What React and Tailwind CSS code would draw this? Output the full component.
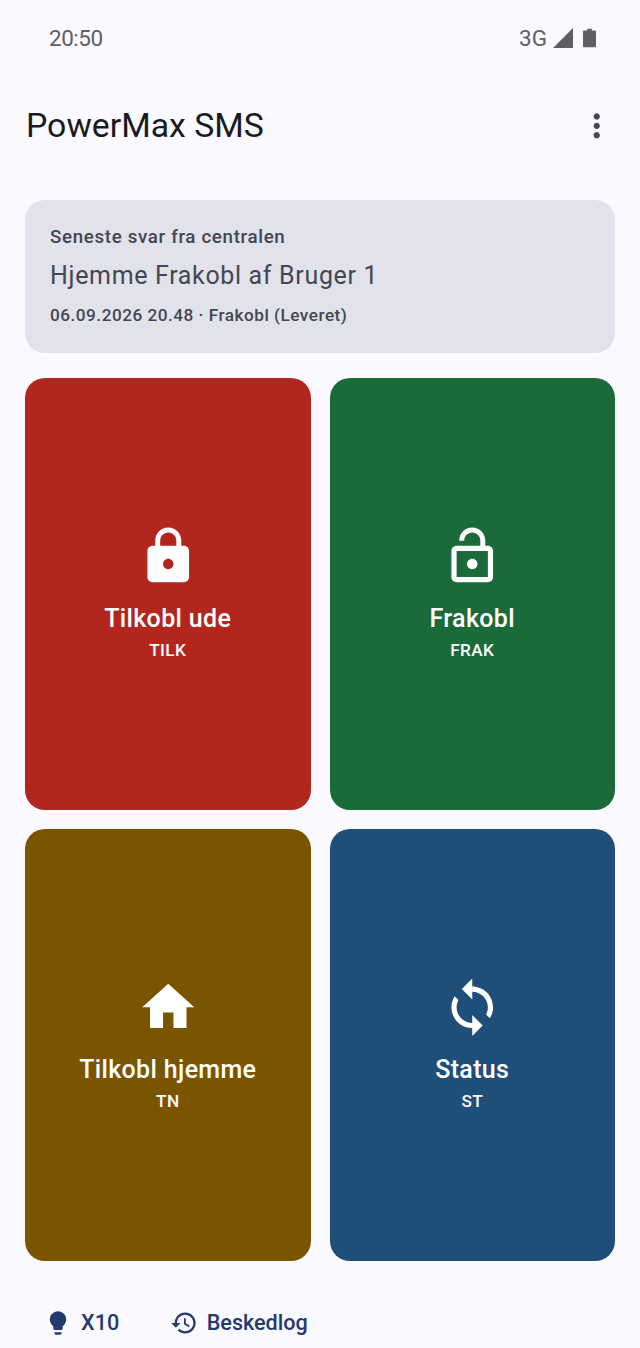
const P = {
  lock: "M18 8h-1V6c0-2.76-2.24-5-5-5S7 3.24 7 6v2H6c-1.1 0-2 .9-2 2v10c0 1.1.9 2 2 2h12c1.1 0 2-.9 2-2V10c0-1.1-.9-2-2-2zm-6 9c-1.1 0-2-.9-2-2s.9-2 2-2 2 .9 2 2-.9 2-2 2zm3.1-9H8.9V6c0-1.71 1.39-3.1 3.1-3.1 1.71 0 3.1 1.39 3.1 3.1v2z",
  open: "M12 17c1.1 0 2-.9 2-2s-.9-2-2-2-2 .9-2 2 .9 2 2 2zm6-9h-1V6c0-2.76-2.24-5-5-5S7 3.24 7 6h1.9c0-1.71 1.39-3.1 3.1-3.1 1.71 0 3.1 1.39 3.1 3.1v2H6c-1.1 0-2 .9-2 2v10c0 1.1.9 2 2 2h12c1.1 0 2-.9 2-2V10c0-1.1-.9-2-2-2zm0 12H6V10h12v10z",
  home: "M10 20v-6h4v6h5v-8h3L12 3 2 12h3v8z",
  sync: "M12 4V1L8 5l4 4V6c3.31 0 6 2.69 6 6 0 1.01-.25 1.97-.7 2.8l1.46 1.46C19.54 15.03 20 13.57 20 12c0-4.42-3.58-8-8-8zm0 14c-3.31 0-6-2.69-6-6 0-1.01.25-1.97.7-2.8L5.24 7.74C4.46 8.97 4 10.43 4 12c0 4.42 3.58 8 8 8v3l4-4-4-4v3z",
  bulb: "M9 21c0 .55.45 1 1 1h4c.55 0 1-.45 1-1v-1H9v1zm3-19C8.14 2 5 5.14 5 9c0 2.38 1.19 4.47 3 5.74V17c0 .55.45 1 1 1h6c.55 0 1-.45 1-1v-2.26c1.81-1.27 3-3.36 3-5.74 0-3.86-3.14-7-7-7z",
  history: "M13 3c-4.97 0-9 4.03-9 9H1l3.89 3.89.07.14L9 12H6c0-3.87 3.13-7 7-7s7 3.13 7 7-3.13 7-7 7c-1.93 0-3.68-.79-4.94-2.06l-1.42 1.42C8.27 19.99 10.51 21 13 21c4.97 0 9-4.03 9-9s-4.03-9-9-9zm-1 5v5l4.28 2.54.72-1.21-3.5-2.08V8H12z",
  more: "M12 8c1.1 0 2-.9 2-2s-.9-2-2-2-2 .9-2 2 .9 2 2 2zm0 2c-1.1 0-2 .9-2 2s.9 2 2 2 2-.9 2-2-.9-2-2-2zm0 6c-1.1 0-2 .9-2 2s.9 2 2 2 2-.9 2-2-.9-2-2-2z",
};

function Icon({ d, className }) {
  return (
    <svg viewBox="0 0 24 24" fill="currentColor" className={className}>
      <path d={d} />
    </svg>
  );
}

function Tile({ bg, icon, title, code }) {
  return (
    <div className={`${bg} rounded-[20px] flex flex-col items-center justify-center text-white`}>
      <Icon d={icon} className="w-[62.5px] h-[62.5px]" />
      <div className="mt-[12.5px] text-[25px] leading-[37.5px] font-medium tracking-[0.35px]">{title}</div>
      <div className="text-[17.2px] leading-[25px] font-medium tracking-[0.4px]">{code}</div>
    </div>
  );
}

export default function App() {
  return (
    <div className="w-[640px] h-[1348px] overflow-hidden flex flex-col bg-[#f9f9ff] font-['Roboto',sans-serif]">
      <div className="h-[76px] shrink-0 pl-[49px] pr-[44px] flex items-center justify-between text-[#5f5f63]">
        <span className="text-[22.5px] leading-none tracking-[-0.5px]">20:50</span>
        <div className="flex items-center">
          <span className="text-[22.5px] leading-none">3G</span>
          <svg viewBox="0 0 20 20" className="w-[20px] h-[20px] ml-[6px]" fill="currentColor">
            <path d="M0 20 20 0v20z" />
          </svg>
          <svg viewBox="0 0 14 20" className="w-[13px] h-[20px] ml-[10px]" fill="currentColor">
            <path d="M4.5 0h5v2H13c.6 0 1 .4 1 1v16c0 .6-.4 1-1 1H1c-.6 0-1-.4-1-1V3c0-.6.4-1 1-1h3.5z" />
          </svg>
        </div>
      </div>
      <div className="h-[100px] shrink-0 pl-[26px] pr-[25px] flex items-center justify-between">
        <h1 className="text-[33.8px] leading-[44px] font-normal text-[#1a1b20]">PowerMax SMS</h1>
        <Icon d={P.more} className="w-[37.5px] h-[37.5px] text-[#44474f]" />
      </div>
      <div className="flex-1 min-h-0 px-[25px] pt-[24px] flex flex-col">
        <div className="h-[153px] shrink-0 rounded-[20px] bg-[#e1e2ec] px-[25px] pt-[25px] text-[#44474f]">
          <div className="text-[18.75px] leading-[25px] font-medium tracking-[0.65px]">Seneste svar fra centralen</div>
          <div className="mt-[7px] text-[25px] leading-[37.5px] tracking-[0.66px]">Hjemme Frakobl af Bruger 1</div>
          <div className="mt-[8px] text-[17.2px] leading-[25px] font-medium tracking-[0.5px]">06.09.2026 20.48 · Frakobl (Leveret)</div>
        </div>
        <div className="mt-[25px] h-[883px] shrink-0 grid grid-cols-2 grid-rows-2 gap-[19px]">
          <Tile bg="bg-[#b3261e]" icon={P.lock} title="Tilkobl ude" code="TILK" />
          <Tile bg="bg-[#1b6b3a]" icon={P.open} title="Frakobl" code="FRAK" />
          <Tile bg="bg-[#7a5500]" icon={P.home} title="Tilkobl hjemme" code="TN" />
          <Tile bg="bg-[#1f4e79]" icon={P.sync} title="Status" code="ST" />
        </div>
        <div className="mt-[44px] flex items-center text-[#26396f] text-[21.6px] leading-[36px] font-medium">
          <Icon d={P.bulb} className="w-[28px] h-[28px] ml-[18.5px]" />
          <span className="ml-[9.5px]">X10</span>
          <Icon d={P.history} className="w-[28px] h-[28px] ml-[51px]" />
          <span className="ml-[8.5px]">Beskedlog</span>
        </div>
      </div>
    </div>
  );
}
